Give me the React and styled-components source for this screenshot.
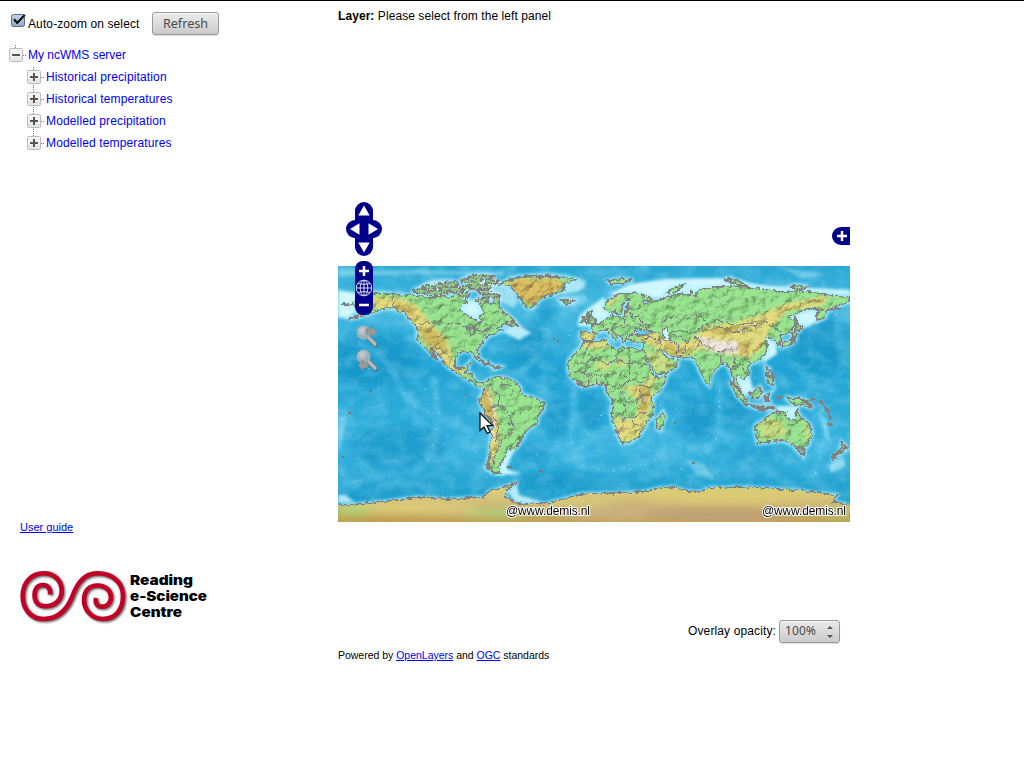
import React from 'react';
import styled, { createGlobalStyle } from 'styled-components';

const GlobalStyle = createGlobalStyle`
  * { box-sizing: border-box; }
  body { margin: 0; background: #fff; color: #000; font: 12px/14px "Liberation Sans", Arial, sans-serif; }
  svg { display: block; }
  a { color: #0000ee; }
`;
const Page = styled.div`
  display: flex;
  width: 1024px;
  height: 768px;
  border-top: 1px solid #000;
  overflow: hidden;
`;
const Sidebar = styled.aside`
  width: 338px;
  display: flex;
  flex-direction: column;
`;
const Content = styled.main`
  width: 512px;
  display: flex;
  flex-direction: column;
`;
const Toolbar = styled.div`
  display: flex;
  align-items: flex-start;
  height: 43px;
  padding: 11px 0 0 10px;
`;
const CheckLabel = styled.label`
  display: flex;
  gap: 2px;
  width: 142px;
  white-space: nowrap;
  letter-spacing: .11px;
  & > span { padding-top: 5px; }
`;
const Button = styled.button`
  width: 67px;
  height: 23px;
  padding: 0;
  border: 1px solid #9a9a9a;
  border-radius: 3px;
  background: linear-gradient(#ececec, #cacaca);
  box-shadow: inset 0 1px #f5f5f5, 0 1px 1px #ddd;
  color: #494949;
  font: 12.6px/21px "Noto Sans", sans-serif;
`;
const Tree = styled.ul`
  list-style: none;
  margin: 0;
  padding: 0 0 0 ${p => (p.$nested ? 18 : 9)}px;
`;
const TreeRow = styled.div`
  display: flex;
  align-items: center;
  height: 22px;
  color: #0000ee;
`;
const Label = styled.span`
  padding-left: 1px;
  letter-spacing: ${p => (p.$wide ? '.14px' : '0')};
`;
const Footer = styled.div`
  margin-top: auto;
  height: 248px;
  padding-left: 20px;
  font-size: 11px;
`;
const Logo = styled.div`margin-top: 33px;`;
const LayerTitle = styled.div`height: 197px; padding-top: 8px; letter-spacing: .07px;`;
const MapView = styled.div`
  position: relative;
  height: 392px;
  padding-top: 68px;
`;
const Overlay = styled.div`
  position: absolute;
  left: ${p => p.$x}px;
  top: ${p => p.$y}px;
`;
const OpacityRow = styled.div`
  display: flex;
  justify-content: flex-end;
  align-items: center;
  gap: 3px;
  height: 24px;
  margin-top: 29px;
  padding-right: 10px;
  letter-spacing: .12px;
`;
const Select = styled.div`
  display: flex;
  align-items: center;
  justify-content: space-between;
  width: 61px;
  height: 23px;
  padding: 0 5px;
  border: 1px solid #999;
  border-radius: 3px;
  background: linear-gradient(#e9e9e9, #cbcbcb);
  box-shadow: inset 0 1px #f4f4f4, 0 1px 1px #ddd;
  color: #494949;
  font: 12px/20px "Noto Sans", sans-serif;
`;
const Credits = styled.div`margin-top: 6px; font-size: 10.48px;`;

const Checkbox = () => (
  <svg width="16" height="16" viewBox="0 0 16 16">
    <defs><linearGradient id="cb" x2="0" y2="1"><stop stopColor="#c3d6e8" /><stop offset="1" stopColor="#86a5c4" /></linearGradient></defs>
    <rect x="1.5" y="2.5" width="13" height="12" rx="2" fill="url(#cb)" stroke="#587087" />
    <path d="M4 7.5 7.2 11.5 14.5 2.5" fill="none" stroke="#fff" strokeWidth="3" opacity=".5" />
    <path d="M4 7.2 7.2 11 14.8 2.8" fill="none" stroke="#111" strokeWidth="2.3" />
  </svg>
);

const Toggle = ({ open, last }) => (
  <svg width="18" height="22" viewBox="0 0 18 22">
    <path d={`M6.5 1v3M14 11.5h4${open || last ? '' : 'M6.5 19v3'}`} stroke="#777" strokeDasharray="1 1" fill="none" />
    <rect x=".5" y="4.5" width="13" height="13" rx="1" fill="#f3f3f3" stroke="#bcbcbc" />
    <path d="M1 13h12v4H1z" fill="#dedede" opacity=".6" />
    <path d={open ? 'M3 11h8' : 'M3 11h8M7 7v8'} stroke="#555" strokeWidth="2" />
  </svg>
);

const land = {
  america: '14,38 20,32 27,28 38,27 55,28 68,30 82,29 90,32 100,30 112,32 118,28 125,31 130,36 124,39 122,43 126,47 132,51 137,53 140,58 144,55 141,51 146,47 144,42 140,38 146,35 152,38 159,37 164,45 171,50 177,55 174,58 165,59 158,62 165,64 158,67 150,70 146,75 142,80 139,84 141,91 138,92 134,86 126,85 119,88 117,94 117,101 122,104 127,101 131,97 130,103 127,107 134,108 137,115 143,118 149,115 154,112 163,111 170,113 177,116 182,121 183,128 195,132 206,137 205,144 200,149 199,157 189,164 185,171 179,181 173,183 169,184 167,191 163,197 160,202 163,207 155,207 148,202 152,187 153,171 155,156 147,147 142,137 142,131 147,123 139,119 130,113 118,106 110,101 104,93 99,87 93,82 100,94 92,86 86,80 80,74 79,61 75,56 67,47 57,43 47,42 37,46 23,50 10,53 28,46 20,43 17,41',
  eurasia: '243,67 255,66 253,60 262,57 268,53 272,51 274,47 276,51 287,50 287,44 295,43 290,42 290,38 292,34 288,34 284,39 284,45 280,49 277,45 272,46 266,43 267,37 275,32 284,28 295,27 304,29 314,33 311,36 304,33 306,38 315,35 322,33 330,31 338,28 352,28 353,24 357,31 360,24 375,22 394,20 412,22 432,24 449,26 465,25 479,27 495,29 512,31 512,36 502,39 495,41 488,46 487,51 479,55 479,47 485,43 475,43 465,44 454,49 449,51 455,54 458,57 454,64 449,67 442,70 442,78 438,78 436,74 429,71 427,75 430,80 428,87 422,94 414,97 409,101 411,106 407,114 404,112 400,108 398,112 402,123 397,120 395,111 392,104 389,97 382,99 375,106 372,112 371,119 367,115 362,105 359,97 354,92 342,91 334,90 327,86 322,81 325,87 329,92 340,94 339,101 329,107 319,109 315,104 310,94 305,86 306,77 295,76 288,71 298,69 309,69 315,66 307,63 303,65 298,62 295,68 289,69 288,73 285,77 284,72 280,69 275,65 273,64 278,69 280,72 277,75 272,68 267,64 260,66 257,69 254,75 245,75 243,72',
  africa: '245,77 254,76 269,74 271,80 279,84 285,81 290,82 305,84 309,97 315,109 319,112 328,111 326,118 320,126 314,132 315,140 314,151 309,156 305,164 300,171 292,176 284,177 280,170 278,163 275,157 273,147 275,137 272,130 268,125 268,119 259,118 245,121 239,117 233,111 230,104 231,94 236,88 242,82',
  greenland: '162,18 175,12 190,10 210,9 228,11 238,14 226,18 226,24 220,27 212,29 203,32 198,37 194,42 188,41 184,35 181,30 177,25 171,20',
  iceland: '222,34 230,34 236,35 233,37 225,37', britain: '250,46 254,45 253,50 258,54 256,58 249,57 251,53', ireland: '244,52 249,50 248,55 243,56',
  madagascar: '325,146 327,151 322,164 319,162 319,154', australia: '417,164 418,159 427,154 432,148 440,146 449,146 447,149 452,153 457,154 459,144 462,151 467,155 472,159 474,167 470,179 465,182 459,182 453,178 449,176 444,174 432,176 420,177',
  tasmania: '460,185 467,184 465,190', nz: '504,177 509,182 504,186 494,194 497,190 503,185', borneo: '412,127 422,121 424,126 420,132 414,131', papua: '447,131 455,133 460,132 468,135 475,142 465,139 455,138',
  sumatra: '392,115 401,123 409,135 408,138 399,130', java: '409,138 420,140 435,141 434,143 418,142', philippines: '428,101 431,103 430,109 434,113 435,119 430,116', japan: '458,65 457,75 450,79 444,81 445,77 454,73 455,66', hokkaido: '458,62 465,60 461,65 457,65', sulawesi: '427,129 432,127 429,131 431,135 427,135', sakhalin: '457,51 460,58 458,60 456,54', cuba: '138,93 149,96 154,99 147,98', haiti: '154,100 161,101 156,103', novaya: '330,27 335,22 348,18 337,26', severnaya: '386,13 394,13 405,17 410,21 396,18', svalbard: '270,15 282,13 295,14 285,17 273,18', siberia: '452,21 458,19 470,21 460,24', newfoundland: '168,56 175,55 179,59 171,60',
};
const antarctica = '0,239 20,238 50,235 80,231 110,233 147,231 150,226 167,221 180,216 169,224 167,232 179,237 205,238 222,234 242,228 272,227 302,226 322,222 335,221 350,225 362,226 372,222 399,221 429,222 465,225 499,229 495,236 512,239 512,258 0,258';
const arctic = [[82,25,9,3],[91,21,9,3],[102,20,8,3],[99,27,14,3],[113,18,9,3],[116,24,12,4],[130,22,8,4],[134,14,14,3],[143,11,15,3],[142,21,14,3],[147,26,7,4],[154,30,10,3],[144,34,8,3],[126,29,7,3],[135,18,8,3],[107,23,7,3],[153,16,9,3],[159,34,4,5]];
const points = Object.values(land);
const borders = [
  'M55 28V42L64 46M81 57H119L125 61 132 63 143 62 151 58M91 82 103 83 112 92M118 101 124 104',
  'M151 114 155 123 162 130 160 139 154 142M163 112 164 118 174 121M155 140 163 139 169 146 173 153 176 162 171 169 166 172 159 184 154 199M156 150 160 159 158 175M170 156 176 161',
  'M253 76 247 87 256 91 247 98V105H234M257 91 270 99 278 93 278 84M291 82V97H309M278 93 291 99V113L304 116 312 112M236 105H247L254 111 267 109 279 107 291 112M250 111V120M258 108V119M267 109 269 119 284 120 292 114M272 126 280 123 286 129 287 136 298 137 305 129 314 131M274 147 286 149 287 137M286 149 285 158 279 170M286 151 296 152 302 148 309 146M294 154 298 159 306 161M302 120 312 120M300 123 306 138M237 97 247 98M245 105 250 111',
  'M255 66 260 69M262 58 268 64 274 63 277 58 286 61 292 58 296 63M271 52 272 57 278 57M278 51 286 53 287 58M286 44 294 49 296 56 305 60 312 64M289 50 300 50 304 57 315 61M288 29 292 36M304 74 311 71 322 74 323 80M311 70 306 77M312 65 322 67M332 73 341 80 338 88M331 67 340 70 350 75 347 84 343 91',
  'M323 58 331 51 347 53 355 49 365 51 370 57 363 62 355 68 347 65 333 65M368 59 378 54 389 57 398 60 409 57 427 55 435 61 443 66M377 59 390 65 402 65 415 60 421 58M356 70 365 78 382 86 394 83 397 97 393 104M350 88 358 83 362 76M382 90 382 98M397 93 404 98 408 109M404 91 413 97'
];
const trenches = 'M207 63Q215 82 194 96T192 115Q204 125 217 135M236 122Q235 145 233 165T239 197M268 160Q252 179 236 184M239 197Q260 205 281 204T343 180M322 133 325 180 344 191M382 119 380 169 367 187M95 110Q103 140 97 174T65 205M0 218Q35 214 59 204M20 77Q54 94 62 119T135 166M458 98Q478 118 483 140T487 167T477 210M498 43 502 83';
const seeded = n => { const v = Math.sin(n * 91.7) * 43758.5; return v - Math.floor(v); };

const WorldMap = () => (
  <svg width="512" height="256" viewBox="0 0 512 256">
    <defs>
      <linearGradient id="sea" x2="0" y2="1"><stop stopColor="#28a7d4" /><stop offset=".15" stopColor="#45b9e1" /><stop offset=".4" stopColor="#1fa3d3" /><stop offset=".72" stopColor="#38b3df" /><stop offset=".9" stopColor="#1e9fce" /></linearGradient>
      <linearGradient id="ice" x2="0" y2="1"><stop stopColor="#a5e080" /><stop offset=".25" stopColor="#d9cb78" /><stop offset=".7" stopColor="#c8ae74" /><stop offset="1" stopColor="#bd9f4c" /></linearGradient>
      <filter id="soft" x="-20%" y="-20%" width="140%" height="140%"><feGaussianBlur stdDeviation="5" /></filter>
      <filter id="shelf"><feGaussianBlur stdDeviation="1.7" /></filter>
      <filter id="coast" x="0" y="0" width="512" height="256" filterUnits="userSpaceOnUse"><feTurbulence type="fractalNoise" baseFrequency=".22" numOctaves="3" seed="7" /><feDisplacementMap in="SourceGraphic" scale="5" xChannelSelector="R" yChannelSelector="G" /></filter>
      <filter id="relief" x="0" y="0" width="512" height="256" filterUnits="userSpaceOnUse" colorInterpolationFilters="sRGB"><feTurbulence type="fractalNoise" baseFrequency=".12 .14" numOctaves="4" seed="12" result="n" /><feDiffuseLighting in="n" surfaceScale="1.4" diffuseConstant="1.22" lightingColor="#fff"><feDistantLight azimuth="225" elevation="53" /></feDiffuseLighting><feComposite in2="SourceGraphic" operator="arithmetic" k1="1.02" /><feComposite in2="SourceAlpha" operator="in" /></filter>
      <filter id="seaTexture" x="0" y="0" width="100%" height="100%"><feTurbulence type="fractalNoise" baseFrequency=".06 .08" numOctaves="5" seed="5" /><feColorMatrix values="0 0 0 0 .6 0 0 0 0 .9 0 0 0 0 1 1.6 0 0 0 -.6" /></filter>
      <clipPath id="landClip">{points.map(p => <polygon key={p} points={p} />)}</clipPath>
      <clipPath id="iceClip"><polygon points={antarctica} /></clipPath>
    </defs>
    <rect width="512" height="256" fill="url(#sea)" />
    <g filter="url(#soft)" fill="#078fc3" opacity=".55"><ellipse cx="35" cy="93" rx="45" ry="28" /><ellipse cx="191" cy="78" rx="20" ry="22" /><ellipse cx="192" cy="186" rx="18" ry="10" /><ellipse cx="218" cy="150" rx="13" ry="23" /><ellipse cx="254" cy="145" rx="12" ry="20" /><ellipse cx="482" cy="77" rx="30" ry="29" /><ellipse cx="360" cy="154" rx="20" ry="22" /><ellipse cx="400" cy="143" rx="14" ry="24" /><ellipse cx="60" cy="181" rx="48" ry="22" /><ellipse cx="220" cy="215" rx="38" ry="8" /><ellipse cx="415" cy="186" rx="38" ry="6" /><ellipse cx="208" cy="47" rx="10" ry="10" /></g>
    <rect width="512" height="256" filter="url(#seaTexture)" opacity=".3" />
    <path d={trenches} fill="none" stroke="#8bdcf6" strokeWidth="8" opacity=".16" filter="url(#shelf)" />
    <path d={trenches} fill="none" stroke="#baf0ff" strokeWidth="1" strokeDasharray="1 4 2 9" opacity=".5" filter="url(#coast)" />
    <g fill="#d0f8ff" filter="url(#shelf)">
      <polygon points="0,24 18,27 25,39 10,53 0,51" /><polygon points="118,34 140,34 151,44 140,59 124,50" /><polygon points="229,12 248,15 246,22 239,26 224,28" opacity=".75" /><polygon points="270,28 292,18 328,13 382,12 430,20 512,24 512,30 430,26 332,34" /><polygon points="242,49 266,31 274,53 260,61 240,60" /><polygon points="451,49 477,42 485,52 470,61 456,62" /><polygon points="425,68 438,76 439,88 425,97" /><polygon points="394,112 411,108 416,126 405,130" /><polygon points="437,140 460,140 460,154 450,156" /><polygon points="163,188 178,180 168,203 184,208 159,209" /><polygon points="168,224 179,218 181,229 210,238 178,237" opacity=".85" /><polygon points="177,56 193,67 181,74 165,66" opacity=".85" /><polygon points="491,199 505,190 508,200 493,207" opacity=".6" /><polygon points="348,194 366,198 376,213 358,208" opacity=".35" />
      <polygon points="0,150 9,151 2,182 0,183" opacity=".4" /><polygon points="0,229 8,229 17,237 0,237" opacity=".8" /><polygon points="480,145 489,155 492,178 487,170" opacity=".4" />
      <polygon points="145,11 163,15 174,23 180,33 176,42 163,36 150,30" opacity=".6" /><polygon points="95,13 112,12 105,16 83,24 79,21" opacity=".65" /><path d="M0 3 40 5 80 4 165 6V9L75 8 0 11ZM445 2 486 8 465 13 458 9ZM222 30 247 28 250 35 238 41 221 39Z" opacity=".35" />
      {arctic.map(([x, y, rx]) => <ellipse key={`${x}-${y}`} cx={x} cy={y} rx={rx} ry="5" opacity=".6" />)}
    </g>
    <g fill="#7bdcf5" stroke="#a7edfc" strokeWidth="5" opacity=".8" filter="url(#shelf)">{points.map(p => <polygon key={p} points={p} />)}</g>
    <polyline points={antarctica.replace(' 512,258 0,258', '')} fill="none" stroke="#a5e8fa" strokeWidth="3" filter="url(#shelf)" />
    <g filter="url(#coast)">
      <g filter="url(#relief)">
        {points.map(p => <polygon key={p} points={p} fill="#96e08d" />)}
        <g clipPath="url(#landClip)">
          <g filter="url(#shelf)" fill="#dfd77b">
            <path d="M35 31 60 31 79 40 91 55 110 75 115 93 128 107 117 107 91 82 76 59 57 43 35 43Z" /><path d="M144 119 153 124 156 145 162 155 161 180 153 199 149 196 152 158 142 140Z" /><path d="M167 17 178 13 218 12 226 18 220 25 195 39 180 29Z" fill="#d9bc62" />
            <path d="M246 66h11v10h-14zM245 77 271 76 269 82 245 83ZM278 150 291 154 309 152 301 171 286 176 277 166ZM286 122 312 116 315 131 309 151 297 153 302 136Z" /><path d="M296 70 316 67 340 77 353 74 369 60 395 57 422 49 440 40 470 33 491 30 485 39 450 45 431 64 423 84 410 92 397 89 366 83 342 91 318 83Z" /><path d="M307 87 322 86 338 100 319 107ZM312 107 320 112 313 122 307 114ZM266 35 280 29 282 33 271 42ZM420 155 439 152 451 166 440 171 425 173ZM464 155 473 168 469 177" opacity=".65" /><ellipse cx="265" cy="99" rx="8" ry="5" opacity=".7" /><ellipse cx="283" cy="97" rx="5" ry="5" opacity=".7" />
          </g>
          <g fill="#bfa34e" opacity=".6" filter="url(#shelf)"><path d="M83 61 96 64 109 75 108 86 94 80 83 74Z" /><path d="M55 34 72 40 79 53 67 46Z" /><path d="M328 75 340 81 336 89 328 85ZM144 121 153 130 158 153 156 175 153 160 143 142ZM301 122 311 120 310 143 301 149ZM399 80 410 76 413 82 401 92ZM382 60 401 63 390 68 372 67ZM177 24 195 35 190 39 180 29ZM195 36 217 26 211 30Z" /></g>
          <path d="M359 70 380 74 399 75 402 87 380 87 364 80Z" fill="#eee2d8" filter="url(#shelf)" />
          <path d="M145 122 151 130 157 147 155 175" fill="none" stroke="#eadbc4" strokeWidth="2" />
        </g>
      </g>
      <polygon points={antarctica} fill="url(#ice)" />
    </g>
    <g clipPath="url(#iceClip)"><g filter="url(#soft)"><ellipse cx="70" cy="242" rx="70" ry="5" fill="#e0d37d" /><ellipse cx="40" cy="253" rx="62" ry="4" fill="#bf9e48" /><ellipse cx="290" cy="246" rx="75" ry="8" fill="#c9b07e" /><ellipse cx="240" cy="236" rx="40" ry="4" fill="#d6cf77" /><ellipse cx="380" cy="231" rx="75" ry="6" fill="#ddca72" /><ellipse cx="380" cy="249" rx="75" ry="7" fill="#bda075" /><ellipse cx="158" cy="247" rx="32" ry="3" fill="#a6df79" /><ellipse cx="15" cy="244" rx="18" ry="4" fill="#a6df79" /><ellipse cx="500" cy="247" rx="15" ry="3" fill="#9fd577" /></g></g>
    <g filter="url(#coast)" shapeRendering="crispEdges" fill="none" stroke="#818181">
      {points.map((p, i) => <polygon key={p} points={p} strokeWidth={i > 4 && i !== 8 ? 1.6 : 1.25} />)}
      <polyline points={antarctica.replace(' 512,258 0,258', '')} strokeWidth="1.3" />
      {arctic.map(([x, y, rx, ry]) => <ellipse key={`${x}-${y}`} cx={x} cy={y} rx={rx * .8} ry={ry * .65} fill="#8cc886" strokeWidth="2" strokeDasharray="5 1.5 2 1" />)}
      <g fill="#62cdec"><polygon points="297,66 301,63 307,65 314,66 309,69 301,68" /><polygon points="324,64 329,62 330,69 332,76 327,74" fill="#c5f6ff" /></g>
      {borders.map(d => <path key={d} d={d} />)}
      <path d="M129 61 137 60 137 65 133 70 132 63 139 64 145 66 154 61" strokeWidth="1.7" />
      <path d="M91 85 99 94M219 27 211 30M186 39 180 30M171 13 190 10 222 11M150 199 157 208M146 147 155 157M152 189 150 203M438 132 445 130M420 144 437 142M482 135 488 142 493 153M489 158 495 159M470 134 478 133M433 104 436 116M459 68 452 77M252 48 250 53M240 116 249 121M502 42 488 44M494 191 507 181M4 38 13 39" strokeWidth="2.5" />
    </g>
    <g fill="#c6f3ff">{Array.from({ length: 155 }, (_, i) => <rect key={i} x={Math.round(seeded(i) * 512)} y={Math.round(58 + seeded(i + 300) * 153)} width={i % 4 ? 1 : 2} height="1" opacity={i < 80 ? .4 : .15} />)}</g>
    <g fill="#777"><path d="M31 124h3v2h-3zM10 146h3v2h-3zM4 190h2v2H4zM126 128h4v1h-4zM169 200h5v2h-5zM201 204h4v2h-4zM215 72h2v2h-2zM219 74h2v2h-2zM220 104h2v1h-2zM354 196h3v2h-3zM336 156h2v2h-2z" /></g>
    <g fontFamily="Liberation Sans, sans-serif" fontSize="12" fill="#000" stroke="#fff" strokeWidth="2" paintOrder="stroke" strokeLinejoin="round">
      <text x="168" y="249" textLength="84">@www.demis.nl</text><text x="424" y="249" textLength="84">@www.demis.nl</text>
    </g>
    <path d="M142 147V164.5L146 161 149.2 167.5 152 166 149 159.7H154.5Z" fill="#fff" stroke="#000" strokeWidth="1.2" />
  </svg>
);

const NavControls = () => (
  <svg width="36" height="114" viewBox="0 0 36 114">
    <g fill="#00008b"><rect x="9" width="18" height="54" rx="9" /><rect y="18" width="36" height="18" rx="9" /><rect x="9" y="59" width="18" height="54" rx="8" /></g>
    <path d="M18 3.5 23.7 13.5H12.3zM18 50.5 23.7 40.5H12.3zM4 27 13.5 21.3v11.4zM32 27 22.5 21.3v11.4z" fill="#fff" />
    <path d="M13 69h10M18 64v10M13 103h10" stroke="#fff" strokeWidth="2.5" />
    <g fill="none" stroke="#d9d9f5"><circle cx="18" cy="86" r="7.8" /><ellipse cx="18" cy="86" rx="3.8" ry="7.8" /><path d="M10 86h16M12 81.5q6 2 12 0M12 90.5q6-2 12 0M18 78v16" /></g>
  </svg>
);

const History = ({ previous }) => (
  <svg width="26" height="26" viewBox="0 0 26 26">
    <defs><radialGradient id="glass" cx=".4" cy=".35"><stop stopColor="#c8d2d6" /><stop offset="1" stopColor="#97abb3" /></radialGradient></defs>
    <path d="m15 15 6 6" stroke="#4e7588" strokeWidth="5" strokeLinecap="round" opacity=".8" />
    <path d="m14 14 6 6" stroke="#b8b8b8" strokeWidth="3.6" strokeLinecap="round" />
    <circle cx="8.5" cy="8.5" r="6.5" fill="url(#glass)" stroke="#acb0b2" />
    <path d={previous ? 'M3 17 8 12v3h5v5H8v3z' : 'M22 7.5 16 2.5V5h-5v5h5v3z'} fill="#999" stroke="#7e8587" strokeWidth=".7" />
  </svg>
);

const spiral = 'M30 27.5C31 21 27 18 23 18C17.5 18 14.5 22 14.5 27.5C14.5 35 18.5 39.2 25 39.2C35 39.2 41.7 33 41.7 24C41.7 13 34 6.3 23.5 6.3C11 6.3 2.7 16 2.7 29C2.7 42 11 52 23.5 52C37 52 46 44 51.7 31C57 16 64 6.3 77.5 6.3C93 6.3 103 16 103 29C103 43 95 52 83 52C72 52 64 43 64 33C64 24 69 18.5 77.5 18.5C85.5 18.5 91 23.5 91 30C91 36 87 39.7 82 39.7C77 39.7 75 36 76 31';

const items = ['Historical precipitation', 'Historical temperatures', 'Modelled precipitation', 'Modelled temperatures'];

export default function App() {
  return (
    <><GlobalStyle /><Page>
      <Sidebar>
        <Toolbar><CheckLabel><Checkbox /><span>Auto-zoom on select</span></CheckLabel><Button>Refresh</Button></Toolbar>
        <Tree><li>
          <TreeRow><Toggle open /><Label>My ncWMS server</Label></TreeRow>
          <Tree as="ul" $nested>{items.map((item, i) => <li key={item}><TreeRow><Toggle last={i === 3} /><Label $wide>{item}</Label></TreeRow></li>)}</Tree>
        </li></Tree>
        <Footer>
          <a href="#guide">User guide</a>
          <Logo><svg width="192" height="58" viewBox="0 0 192 58">
            <defs><filter id="logoShadow"><feGaussianBlur stdDeviation=".8" /></filter></defs>
            <path d={spiral} transform="translate(1.2 1.2)" fill="none" stroke="#666" strokeWidth="4.8" filter="url(#logoShadow)" />
            <path d={spiral} fill="none" stroke="#c00027" strokeWidth="4.6" />
            <g fontFamily="Inter, Liberation Sans, sans-serif" fontWeight="900" fontSize="13"><text x="110" y="17.5" textLength="63" lengthAdjust="spacingAndGlyphs">Reading</text><text x="110" y="34" textLength="77" lengthAdjust="spacingAndGlyphs">e-Science</text><text x="110" y="50.2" textLength="52" lengthAdjust="spacingAndGlyphs">Centre</text></g>
          </svg></Logo>
        </Footer>
      </Sidebar>
      <Content>
        <LayerTitle><b>Layer:</b> Please select from the left panel</LayerTitle>
        <MapView><WorldMap />
          <Overlay $x={8} $y={4}><NavControls /></Overlay>
          <Overlay $x={17} $y={126}><History /></Overlay>
          <Overlay $x={17} $y={150}><History previous /></Overlay>
          <Overlay $x={494} $y={29}><svg width="18" height="18"><path d="M18 0H9a9 9 0 0 0 0 18h9z" fill="#00008b" /><path d="M5 9h10M10 4v10" stroke="#fff" strokeWidth="2.5" /></svg></Overlay>
        </MapView>
        <OpacityRow><span>Overlay opacity:</span><Select><span>100%</span><svg width="8" height="14"><path d="m1 5 3-3 3 3zM1 11l3 3 3-3z" fill="#555" /></svg></Select></OpacityRow>
        <Credits>Powered by <a href="#openlayers">OpenLayers</a> and <a href="#ogc">OGC</a> standards</Credits>
      </Content>
    </Page></>
  );
}
